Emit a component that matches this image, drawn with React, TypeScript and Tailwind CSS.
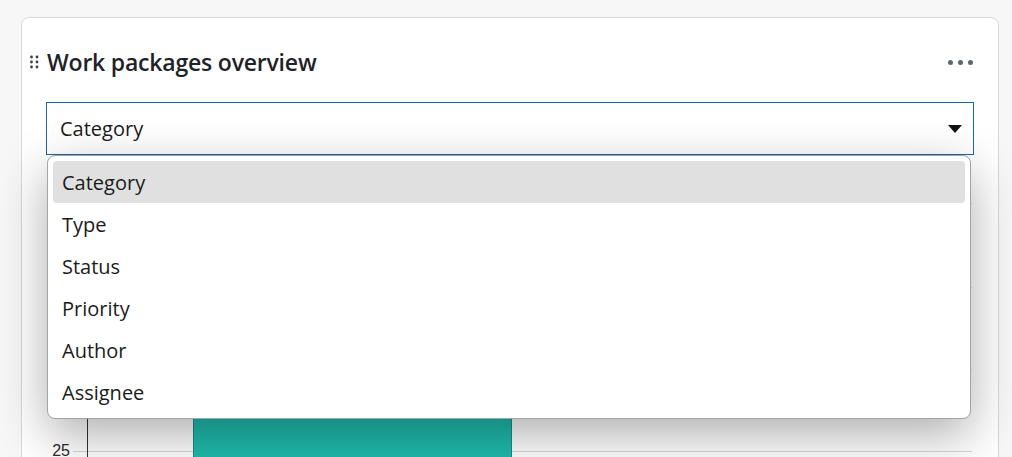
import React from "react";

const options = ["Category", "Type", "Status", "Priority", "Author", "Assignee"];

function DragHandle() {
  return (
    <svg width="9" height="14" viewBox="0 0 9 14" className="shrink-0">
      {[0, 1].map((c) =>
        [0, 1, 2].map((r) => (
          <circle key={`${c}-${r}`} cx={1.5 + c * 5.5} cy={2 + r * 5} r="1.4" fill="#3a3f45" />
        ))
      )}
    </svg>
  );
}

function Chart() {
  const grid = [42, 126, 208, 290];
  return (
    <svg width="976" height="300" className="block">
      {grid.map((y) => (
        <line key={y} x1="51" x2="950" y1={y + 0.5} y2={y + 0.5} stroke="#d3d8de" strokeWidth="1" />
      ))}
      <text x="48" y="295" textAnchor="end" fontSize="16" fill="#2b2b2b" fontFamily="'Liberation Sans', Arial, sans-serif">
        25
      </text>
      <rect x="171.5" y="140.5" width="318" height="200" fill="#1fbcad" stroke="#178f85" strokeWidth="1" />
      <line x1="65.5" x2="65.5" y1="20" y2="300" stroke="#333" strokeWidth="1" />
    </svg>
  );
}

export default function App() {
  return (
    <div
      className="w-[1012px] h-[457px] overflow-hidden bg-[#f7f7f7] pt-[17px] pl-[21px]"
      style={{ fontFamily: "'Open Sans', 'Noto Sans', sans-serif" }}
    >
      <div className="w-[978px] h-[520px] bg-white border border-[#d4d9df] rounded-lg">
        <div className="flex items-center pt-[32px] pl-[8px] pr-[25px]">
          <DragHandle />
          <h2 className="ml-[8px] text-[23px] leading-[24px] font-semibold text-[#1f2328] tracking-[-0.2px]">
            Work packages overview
          </h2>
          <div className="ml-auto flex items-center gap-[5px]">
            <span className="w-[5px] h-[5px] rounded-full bg-[#5e6670]" />
            <span className="w-[5px] h-[5px] rounded-full bg-[#5e6670]" />
            <span className="w-[5px] h-[5px] rounded-full bg-[#5e6670]" />
          </div>
        </div>
        <div className="relative mt-[28px] mx-[24px] h-[53px]">
          <div className="h-[53px] border border-[#1a68a6] flex items-center pl-[13px] pr-[11px] bg-white">
            <span className="text-[20px] text-[#1b1b1b] pt-[1px]">Category</span>
            <svg width="14" height="8" viewBox="0 0 14 8" className="ml-auto">
              <path d="M0 0 H14 L7 8 Z" fill="#111" />
            </svg>
          </div>
          <div className="absolute z-10 left-[1px] top-[53px] w-[924px] bg-white border border-[#a4a4a4] rounded-lg px-[5px] pt-[5px] pb-[5px] shadow-[0_16px_50px_rgba(0,0,0,0.32)]">
            {options.map((o, i) => (
              <div
                key={o}
                className={`h-[42px] flex items-center pl-[9px] pt-[2px] rounded-[4px] text-[20px] text-[#1b1b1b] ${i === 0 ? "bg-[#e0e0e0]" : ""}`}
              >
                {o}
              </div>
            ))}
          </div>
        </div>
        <div className="mt-[6px]">
          <Chart />
        </div>
      </div>
    </div>
  );
}
